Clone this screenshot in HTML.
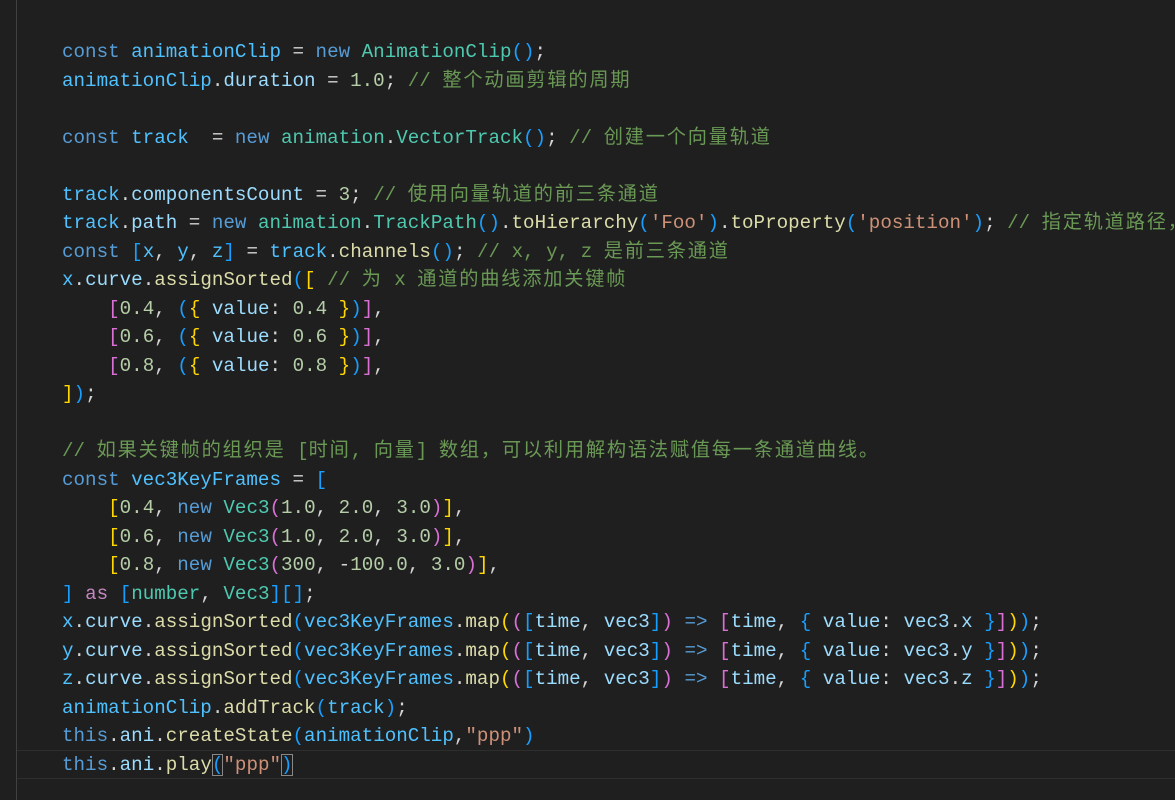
<!DOCTYPE html>
<html><head><meta charset="utf-8"><style>
html,body{margin:0;padding:0;background:#1f1f1f;width:1175px;height:800px;overflow:hidden;position:relative}
.vl{position:absolute;left:16px;top:0;width:1px;height:800px;background:#404040}
.cur{position:absolute;left:17px;right:0;top:750px;height:27px;border-top:1px solid #2e2e2e;border-bottom:1px solid #2e2e2e}
pre{position:absolute;left:62px;top:38px;margin:0;font-family:"Liberation Mono","Noto Sans CJK SC",monospace;font-size:19.22px;line-height:28.5px;color:#d4d4d4;white-space:pre}
.k{color:#569cd6}.c{color:#4fc1ff}.v{color:#9cdcfe}.t{color:#4ec9b0}.f{color:#dcdcaa}.n{color:#b5cea8}.m{color:#6a9955}.s{color:#ce9178}.a{color:#c586c0}
.b1{color:#179fff}.b2{color:#ffd700}.b3{color:#da70d6}
.z{letter-spacing:1.8px}
.bx{outline:1px solid #888;outline-offset:-1px}
</style></head><body>
<div class="vl"></div><div class="cur"></div>
<pre><span class="k">const</span> <span class="c">animationClip</span> = <span class="k">new</span> <span class="t">AnimationClip</span><span class="b1">()</span>;
<span class="c">animationClip</span>.<span class="v">duration</span> = <span class="n">1.0</span>; <span class="m">// <span class="z">整个动画剪辑的周期</span></span>

<span class="k">const</span> <span class="c">track</span>  = <span class="k">new</span> <span class="t">animation</span>.<span class="t">VectorTrack</span><span class="b1">()</span>; <span class="m">// <span class="z">创建一个向量轨道</span></span>

<span class="c">track</span>.<span class="v">componentsCount</span> = <span class="n">3</span>; <span class="m">// <span class="z">使用向量轨道的前三条通道</span></span>
<span class="c">track</span>.<span class="v">path</span> = <span class="k">new</span> <span class="t">animation</span>.<span class="t">TrackPath</span><span class="b1">()</span>.<span class="f">toHierarchy</span><span class="b1">(</span><span class="s">'Foo'</span><span class="b1">)</span>.<span class="f">toProperty</span><span class="b1">(</span><span class="s">'position'</span><span class="b1">)</span>; <span class="m">// <span class="z">指定轨道路径，</span></span>
<span class="k">const</span> <span class="b1">[</span><span class="c">x</span>, <span class="c">y</span>, <span class="c">z</span><span class="b1">]</span> = <span class="c">track</span>.<span class="f">channels</span><span class="b1">()</span>; <span class="m">// x, y, z <span class="z">是前三条通道</span></span>
<span class="c">x</span>.<span class="v">curve</span>.<span class="f">assignSorted</span><span class="b1">(</span><span class="b2">[</span> <span class="m">// <span class="z">为</span> x <span class="z">通道的曲线添加关键帧</span></span>
    <span class="b3">[</span><span class="n">0.4</span>, <span class="b1">(</span><span class="b2">{</span> <span class="v">value</span>: <span class="n">0.4</span> <span class="b2">}</span><span class="b1">)</span><span class="b3">]</span>,
    <span class="b3">[</span><span class="n">0.6</span>, <span class="b1">(</span><span class="b2">{</span> <span class="v">value</span>: <span class="n">0.6</span> <span class="b2">}</span><span class="b1">)</span><span class="b3">]</span>,
    <span class="b3">[</span><span class="n">0.8</span>, <span class="b1">(</span><span class="b2">{</span> <span class="v">value</span>: <span class="n">0.8</span> <span class="b2">}</span><span class="b1">)</span><span class="b3">]</span>,
<span class="b2">]</span><span class="b1">)</span>;

<span class="m">// <span class="z">如果关键帧的组织是</span> [<span class="z">时间</span>, <span class="z">向量</span>] <span class="z">数组，可以利用解构语法赋值每一条通道曲线。</span></span>
<span class="k">const</span> <span class="c">vec3KeyFrames</span> = <span class="b1">[</span>
    <span class="b2">[</span><span class="n">0.4</span>, <span class="k">new</span> <span class="t">Vec3</span><span class="b3">(</span><span class="n">1.0</span>, <span class="n">2.0</span>, <span class="n">3.0</span><span class="b3">)</span><span class="b2">]</span>,
    <span class="b2">[</span><span class="n">0.6</span>, <span class="k">new</span> <span class="t">Vec3</span><span class="b3">(</span><span class="n">1.0</span>, <span class="n">2.0</span>, <span class="n">3.0</span><span class="b3">)</span><span class="b2">]</span>,
    <span class="b2">[</span><span class="n">0.8</span>, <span class="k">new</span> <span class="t">Vec3</span><span class="b3">(</span><span class="n">300</span>, -<span class="n">100.0</span>, <span class="n">3.0</span><span class="b3">)</span><span class="b2">]</span>,
<span class="b1">]</span> <span class="a">as</span> <span class="b1">[</span><span class="t">number</span>, <span class="t">Vec3</span><span class="b1">][]</span>;
<span class="c">x</span>.<span class="v">curve</span>.<span class="f">assignSorted</span><span class="b1">(</span><span class="c">vec3KeyFrames</span>.<span class="f">map</span><span class="b2">(</span><span class="b3">(</span><span class="b1">[</span><span class="v">time</span>, <span class="v">vec3</span><span class="b1">]</span><span class="b3">)</span> <span class="k">=&gt;</span> <span class="b3">[</span><span class="v">time</span>, <span class="b1">{</span> <span class="v">value</span>: <span class="v">vec3</span>.<span class="v">x</span> <span class="b1">}</span><span class="b3">]</span><span class="b2">)</span><span class="b1">)</span>;
<span class="c">y</span>.<span class="v">curve</span>.<span class="f">assignSorted</span><span class="b1">(</span><span class="c">vec3KeyFrames</span>.<span class="f">map</span><span class="b2">(</span><span class="b3">(</span><span class="b1">[</span><span class="v">time</span>, <span class="v">vec3</span><span class="b1">]</span><span class="b3">)</span> <span class="k">=&gt;</span> <span class="b3">[</span><span class="v">time</span>, <span class="b1">{</span> <span class="v">value</span>: <span class="v">vec3</span>.<span class="v">y</span> <span class="b1">}</span><span class="b3">]</span><span class="b2">)</span><span class="b1">)</span>;
<span class="c">z</span>.<span class="v">curve</span>.<span class="f">assignSorted</span><span class="b1">(</span><span class="c">vec3KeyFrames</span>.<span class="f">map</span><span class="b2">(</span><span class="b3">(</span><span class="b1">[</span><span class="v">time</span>, <span class="v">vec3</span><span class="b1">]</span><span class="b3">)</span> <span class="k">=&gt;</span> <span class="b3">[</span><span class="v">time</span>, <span class="b1">{</span> <span class="v">value</span>: <span class="v">vec3</span>.<span class="v">z</span> <span class="b1">}</span><span class="b3">]</span><span class="b2">)</span><span class="b1">)</span>;
<span class="c">animationClip</span>.<span class="f">addTrack</span><span class="b1">(</span><span class="c">track</span><span class="b1">)</span>;
<span class="k">this</span>.<span class="v">ani</span>.<span class="f">createState</span><span class="b1">(</span><span class="c">animationClip</span>,<span class="s">"ppp"</span><span class="b1">)</span>
<span class="k">this</span>.<span class="v">ani</span>.<span class="f">play</span><span class="b1 bx">(</span><span class="s">"ppp"</span><span class="b1 bx">)</span></pre>
</body></html>
